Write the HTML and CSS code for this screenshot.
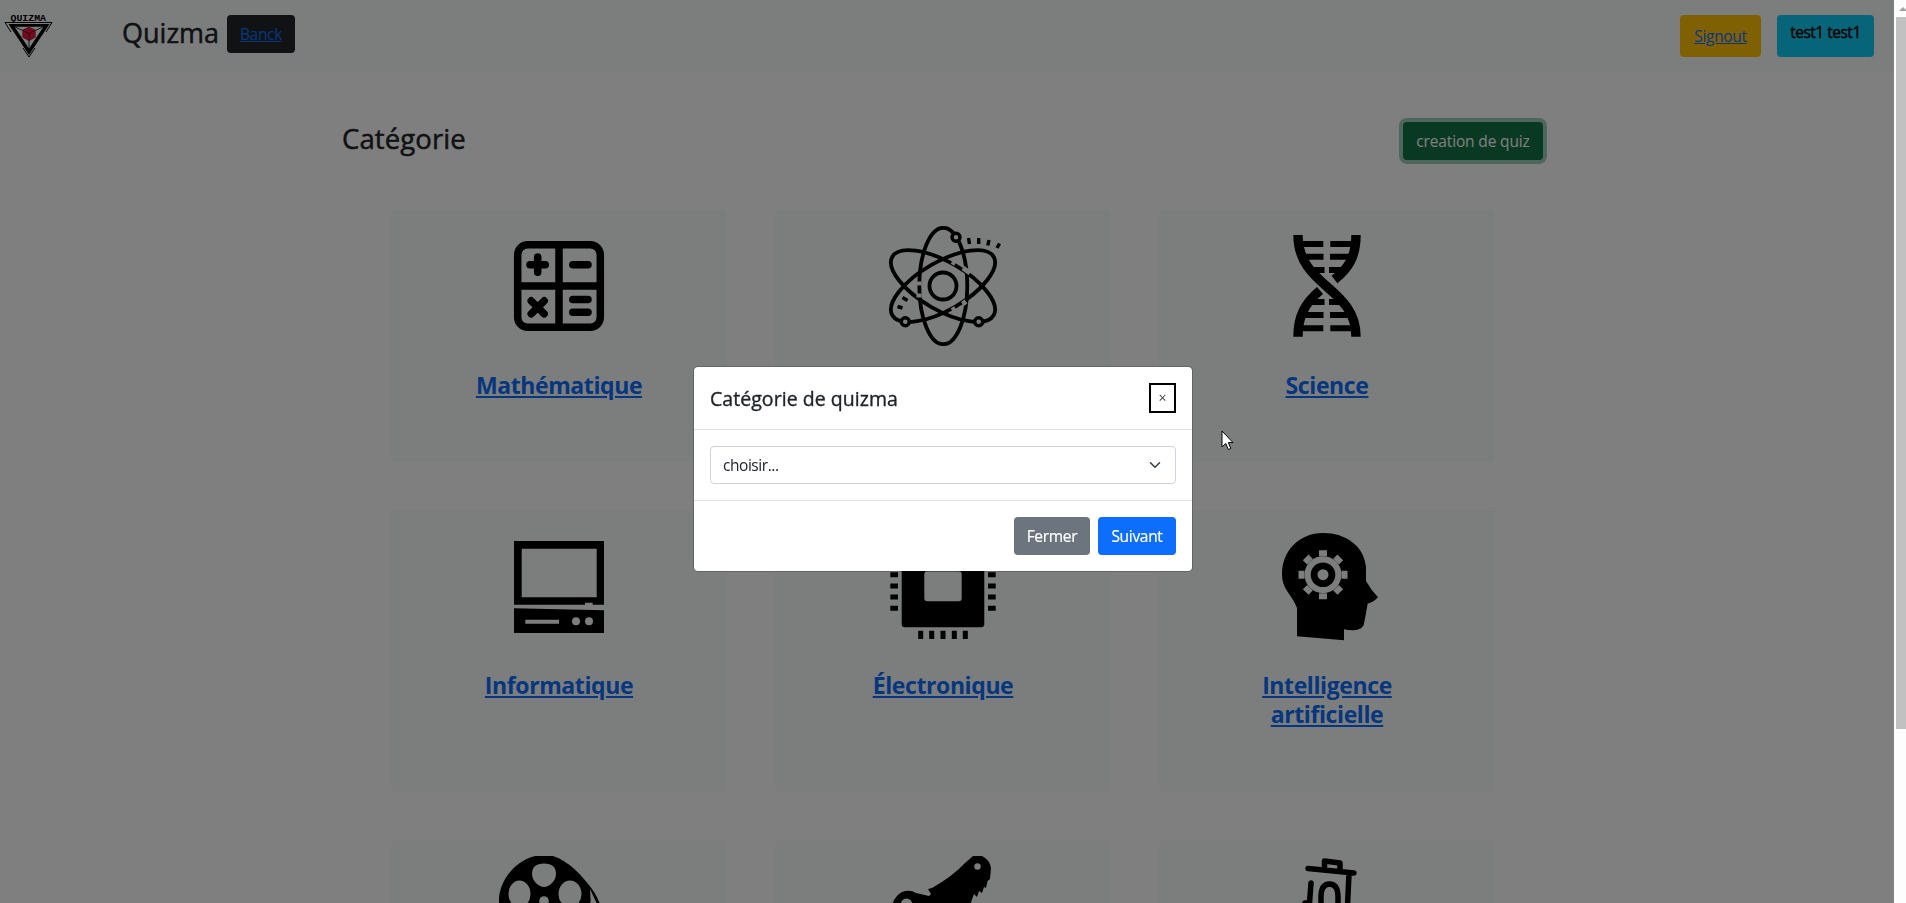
FILE: index.html
```html
<!DOCTYPE html>
<html lang="fr">
<head>
<meta charset="utf-8">
<title>Quizma</title>
<link rel="stylesheet" href="styles.css">
</head>
<body>
<div class="page">
  <nav class="navbar">
    <svg class="logo" viewBox="0 0 56 60">
      <text class="logo-text" x="10.5" y="20.5" textLength="35.5" lengthAdjust="spacingAndGlyphs">QUIZMA</text>
      <path d="M5 22.500H52L46 32M5 22.500L11 32M23 48l6 9 6-9" fill="none" stroke="#000" stroke-width="1"/>
      <path d="M8.500 24H49.500L29 55ZM14.500 26.800L29 48.500 43.500 26.800Z" fill="#000" fill-rule="evenodd"/>
      <path d="M15 27l9 4M43 27l-9 4M29 40v11" stroke="#222" stroke-width=".9"/>
      <path d="M29 27l6.300 3v7.200l-6.300 3.500-6.300-3.500v-7.200z" fill="#e3173a" stroke="#5a0a18" stroke-width=".5"/>
      <path d="M23 30.500l6 3 6-3M29 33.500v7" fill="none" stroke="#5a0a18" stroke-width=".8"/>
    </svg>
    <span class="brand">Quizma</span>
    <a class="btn btn-dark" href="#"><u>Banck</u></a>
    <div class="nav-end">
      <a class="btn btn-warning" href="#"><u>Signout</u></a>
      <span class="btn btn-info">test1 test1</span>
    </div>
  </nav>

  <header class="heading">
    <h2>Catégorie</h2>
    <button class="btn btn-success">creation de quiz</button>
  </header>

  <main class="grid">
    <article class="card">
      <svg class="icon" viewBox="0 0 120 120">
        <g fill="none" stroke="#000" stroke-width="7.500" stroke-linecap="round">
          <rect x="18.700" y="18.700" width="82.600" height="82.600" rx="10"/>
          <path d="M60 19V101M19 60H101M31 38.700H46.300M38.700 31V46.300M73.800 38.700H89M73.800 73.600H89M73.800 86.200H89M32.200 74.800L45.200 87.800M45.200 74.800L32.200 87.800"/>
        </g>
      </svg>
      <h3><a href="#">Mathématique</a></h3>
    </article>
    <article class="card">
      <svg class="icon" viewBox="0 0 120 120">
        <g fill="none" stroke="#000" stroke-width="3.800">
          <ellipse cx="60.300" cy="60" rx="24" ry="58.200"/>
          <ellipse cx="60" cy="60" rx="24" ry="58.500" transform="rotate(60 60 60)"/>
          <ellipse cx="60" cy="60" rx="24" ry="58.500" transform="rotate(-60 60 60)"/>
          <circle cx="60" cy="60" r="13.500"/>
        </g>
        <path class="gap" d="M36 55.500v4M36 67.500v4M69 35.500l3.500 2M80 42l7 5M69 84.500l3.500-2M79.500 78l3.500-2.500"/>
        <g class="node" stroke="#000" stroke-width="3.400">
          <circle cx="73" cy="11.300" r="4"/><circle cx="22.300" cy="95.700" r="4"/><circle cx="95.700" cy="95.700" r="4"/>
        </g>
        <path d="M85.500 12l1 6M95.700 12v6M106 14l-1.200 5.500M116.500 17.500l-2.500 4.500M19.500 71.500l5 3M14.500 80.500l5 1.500" stroke="#000" stroke-width="3.400"/>
      </svg>
    </article>
    <article class="card">
      <svg class="icon" viewBox="0 0 120 120">
        <g fill="none" stroke="#000" stroke-width="9.400">
          <path d="M31 9C31 61 89 61 89 110.700M89 9C89 30 82 42 67.500 53.500M31 110.700C31 90 38 77 53 64.500"/>
          <path stroke-width="6" d="M32 18H56.300M63.300 18H88M35 30.700H56.500M63 30.700H85M43 44H57.500M62 44H77M44 76H57.500M62 76H76M35 89H56.500M63 89H85M32 102.300H56.300M63.300 102.300H88"/>
        </g>
      </svg>
      <h3><a href="#">Science</a></h3>
    </article>

    <article class="card">
      <svg class="icon" viewBox="0 0 120 120">
        <path fill-rule="evenodd" d="M15 15H105V78.700H93.700V76.700H86V78.700H15ZM22.700 22.700V71.300H97.700V22.700ZM15 82.200L105 84.300V107H15ZM26.300 93.700V97.700H60V93.700ZM73 95.300a4 4 0 1 0 8 0a4 4 0 1 0-8 0M86 95.300a4 4 0 1 0 8 0a4 4 0 1 0-8 0"/>
      </svg>
      <h3><a href="#">Informatique</a></h3>
    </article>
    <article class="card">
      <svg class="icon" viewBox="0 0 120 120">
        <path fill-rule="evenodd" d="M22 18.700H98a3.300 3.300 0 0 1 3.300 3.300V98a3.300 3.300 0 0 1-3.300 3.300H22a3.300 3.300 0 0 1-3.300-3.300V22a3.300 3.300 0 0 1 3.300-3.300ZM44.300 45.300a3 3 0 0 0-3 3V72.300a3 3 0 0 0 3 3H75.700a3 3 0 0 0 3-3V48.300a3 3 0 0 0-3-3Z"/>
        <path stroke="#000" stroke-width="5" d="M7.300 37.500H15M7.300 48.700H15M7.300 60H15M7.300 71H15M7.300 82.300H15M105 37.500H112.700M105 48.700H112.700M105 60H112.700M105 71H112.700M105 82.300H112.700M37.700 104.700V113M48.700 104.700V113M60 104.700V113M71.300 104.700V113M82.300 104.700V113M37.700 7V15M48.700 7V15M60 7V15M71.300 7V15M82.300 7V15"/>
      </svg>
      <h3><a href="#">Électronique</a></h3>
    </article>
    <article class="card">
      <svg class="icon" viewBox="0 0 120 120">
        <path d="M56 7C32 7 15 25 15 48C15 64 25 68 30 82V110.300L77 114.300V103.300C84 105 94 105 96.700 99C98 94 99.500 84 100.700 77.600Q106 76.500 111 71.300Q104 64 99 55V41C97 20 79 7 56 7Z"/>
        <g class="cut">
          <circle cx="56" cy="48.700" r="18.500"/>
          <path d="M52 24.200h8v6h-8zM52 67.200h8v6h-8zM31.500 44.700h6v8h-6zM74.500 44.700h6v8h-6z"/>
          <path transform="rotate(45 56 48.700)" d="M52 24.200h8v6h-8zM52 67.200h8v6h-8zM31.500 44.700h6v8h-6zM74.500 44.700h6v8h-6z"/>
        </g>
        <circle cx="56" cy="48.700" r="12.300"/>
        <circle class="cut" cx="56" cy="48.700" r="5.500"/>
      </svg>
      <h3><a href="#">Intelligence artificielle</a></h3>
    </article>

    <article class="card">
      <svg class="icon" viewBox="0 0 120 120">
        <path d="M36 0H54C70 5 83 20 90 29C97 38 101 46 105 60H97L91 45V90H0V42C2 22 17 5 36 0Z"/>
        <g class="cut">
          <path d="M45 7.500C53 7.500 57 11 57 18C57 25 50 31 45 31C40 31 33 25 33 18C33 11 37 7.500 45 7.500Z"/>
          <ellipse cx="20.500" cy="38" rx="11" ry="13.500"/><ellipse cx="71" cy="38" rx="11.500" ry="13.500"/>
          <circle cx="45" cy="45" r="4.800"/>
          <path d="M91 33L99 50H92Z"/>
        </g>
      </svg>
    </article>
    <article class="card">
      <svg class="icon" viewBox="0 0 120 120">
        <path d="M90 0H99Q107 4 108 12L107 23 104.500 25 103 32 101 31 99 37 96 35 94 41 91 38 87 49V60H7Q8 42 19 36Q27 33 33 37L46 40 48 38 45 33 49 32Q70 20 82 7Z"/>
        <circle class="cut" cx="94.500" cy="10.500" r="3.200"/><circle class="cut" cx="23.500" cy="48" r="5.500"/>
      </svg>
    </article>
    <article class="card">
      <svg class="icon" viewBox="0 0 120 120">
        <path fill="none" stroke="#000" stroke-width="5.500" stroke-linecap="round" stroke-linejoin="round" d="M41 12.500L87 17M57.500 13V5L73 7V14M82 18L80 60M44 27L42.500 47H38M54 60V41Q54 28 62.500 28Q71 28 71 41V60"/>
      </svg>
    </article>
  </main>
</div>

<div class="backdrop"></div>

<section class="modal">
  <div class="modal-header">
    <h5>Catégorie de quizma</h5>
    <button class="close">×</button>
  </div>
  <div class="modal-body">
    <div class="select">
      <span>choisir...</span>
      <svg width="16" height="12" viewBox="0 0 16 16"><path d="M2 5l6 6 6-6" fill="none" stroke="#343a40" stroke-width="2" stroke-linecap="round" stroke-linejoin="round"/></svg>
    </div>
  </div>
  <div class="modal-footer">
    <button class="btn btn-secondary">Fermer</button>
    <button class="btn btn-primary">Suivant</button>
  </div>
</section>

<div class="scrollbar"><i class="arrow"></i><i class="thumb"></i></div>
<svg class="cursor" viewBox="0 0 13 21"><path d="M1 1V17L4.800 13.500 7.300 19.500 9.800 18.400 7.300 12.600H12Z" fill="#fff" stroke="#000" stroke-width="1"/></svg>
</body>
</html>
```
FILE: styles.css
```css
* { box-sizing: border-box; }
html, body { height: 100%; }
body {
  margin: 0;
  overflow: hidden;
  background: #fff;
  color: #212529;
  font: 15.5px/24px "Open Sans", "Noto Sans", sans-serif;
  letter-spacing: -.3px;
}
h2, h3, h5 { margin: 0; font-weight: 400; }
h2, h5, .brand { -webkit-text-stroke: .5px currentColor; }
.page { width: 1894px; height: 903px; overflow: hidden; }

.navbar {
  display: flex;
  align-items: flex-start;
  height: 72px;
  padding: 15px 20px 0 0;
  background: #f8fbfa;
}
.logo { width: 56px; height: 60px; margin: -15px 66px 0 0; }
.logo-text { font: bold 9px "Liberation Mono", monospace; letter-spacing: 0; }
.brand { width: 105px; font-size: 27px; line-height: 36px; letter-spacing: 0; }
.nav-end { display: flex; gap: 16px; margin-left: auto; }

.btn {
  display: block;
  height: 38px;
  padding: 6px 0;
  border: 1px solid transparent;
  border-radius: 4px;
  font: inherit;
  line-height: 24px;
  letter-spacing: inherit;
  text-align: center;
  text-decoration: none;
  white-space: nowrap;
}
.btn-dark { width: 68px; background: #212529; color: #0d6efd; }
.btn-warning { width: 81px; height: 42px; padding-top: 8px; background: #ffc107; color: #0d6efd; }
.btn-info {
  width: 97px;
  height: 42px;
  padding-top: 4px;
  background: #0dcaf0;
  color: #000;
  letter-spacing: -.5px;
  -webkit-text-stroke: .4px currentColor;
}
.btn-success { width: 140px; background: #157347; color: #fff; letter-spacing: -.15px; box-shadow: 0 0 0 4px rgba(60, 153, 110, .5); }
.btn-secondary { width: 76px; background: #6c757d; color: #fff; -webkit-text-stroke: .2px currentColor; }
.btn-primary { width: 78px; background: #0d6efd; color: #fff; -webkit-text-stroke: .2px currentColor; }

.heading {
  display: flex;
  justify-content: space-between;
  padding: 50px 351px 0 342px;
}
.heading h2 { font-size: 27.5px; line-height: 33px; letter-spacing: .1px; }

.grid {
  display: grid;
  grid-template-columns: repeat(3, 336px);
  grid-template-rows: 252px 282px 282px;
  gap: 48px;
  padding: 50px 0 0 391px;
}
.card {
  display: flex;
  flex-direction: column;
  align-items: center;
  padding-top: 16px;
  border-radius: 4px;
  background: #f8fbfa;
}
.icon { width: 120px; height: 120px; }
.gap { fill: none; stroke: #f8fbfa; stroke-width: 5; }
.node, .cut { fill: #f8fbfa; }
.card h3 {
  width: 180px;
  margin-top: 25px;
  font-size: 23px;
  font-weight: 700;
  line-height: 28.8px;
  letter-spacing: -.4px;
  text-align: center;
}
.card a { color: #0d6efd; }

.backdrop { position: fixed; inset: 0; background: rgba(0, 0, 0, .5); }

.modal {
  position: fixed;
  left: 693px;
  top: 366px;
  width: 500px;
  border: 1px solid rgba(0, 0, 0, .2);
  border-radius: 5px;
  background: #fff;
  background-clip: padding-box;
}
.modal-header {
  display: flex;
  align-items: center;
  justify-content: space-between;
  padding: 16px;
  border-bottom: 1px solid #dee2e6;
}
.modal-header h5 { padding-top: 1px; font-size: 19.5px; line-height: 29px; letter-spacing: .05px; -webkit-text-stroke-width: .35px; }
.close {
  width: 27px;
  height: 30px;
  padding: 0;
  border: 2px solid #000;
  background: #fff;
  color: #444;
  font: 14px/26px "Open Sans", sans-serif;
}
.modal-body { padding: 16px; }
.select {
  display: flex;
  align-items: center;
  justify-content: space-between;
  height: 38px;
  padding: 0 12px;
  border: 1px solid #ced4da;
  border-radius: 4px;
  letter-spacing: -.45px;
}
.modal-footer {
  display: flex;
  justify-content: flex-end;
  gap: 8px;
  padding: 16px;
  border-top: 1px solid #dee2e6;
}

.scrollbar {
  position: fixed;
  top: 0;
  right: 0;
  width: 12px;
  height: 903px;
  padding-left: 2px;
  background: #fdfdfd;
}
.arrow {
  display: block;
  width: 0;
  height: 11px;
  margin-left: 3px;
  border: solid transparent;
  border-width: 7px 4px 0;
  border-bottom: 4px solid #a3a3a3;
}
.thumb { display: block; height: 712px; margin-top: 6px; background: #c1c1c1; }
.cursor { position: fixed; left: 1221px; top: 430px; width: 13px; height: 21px; }
```
